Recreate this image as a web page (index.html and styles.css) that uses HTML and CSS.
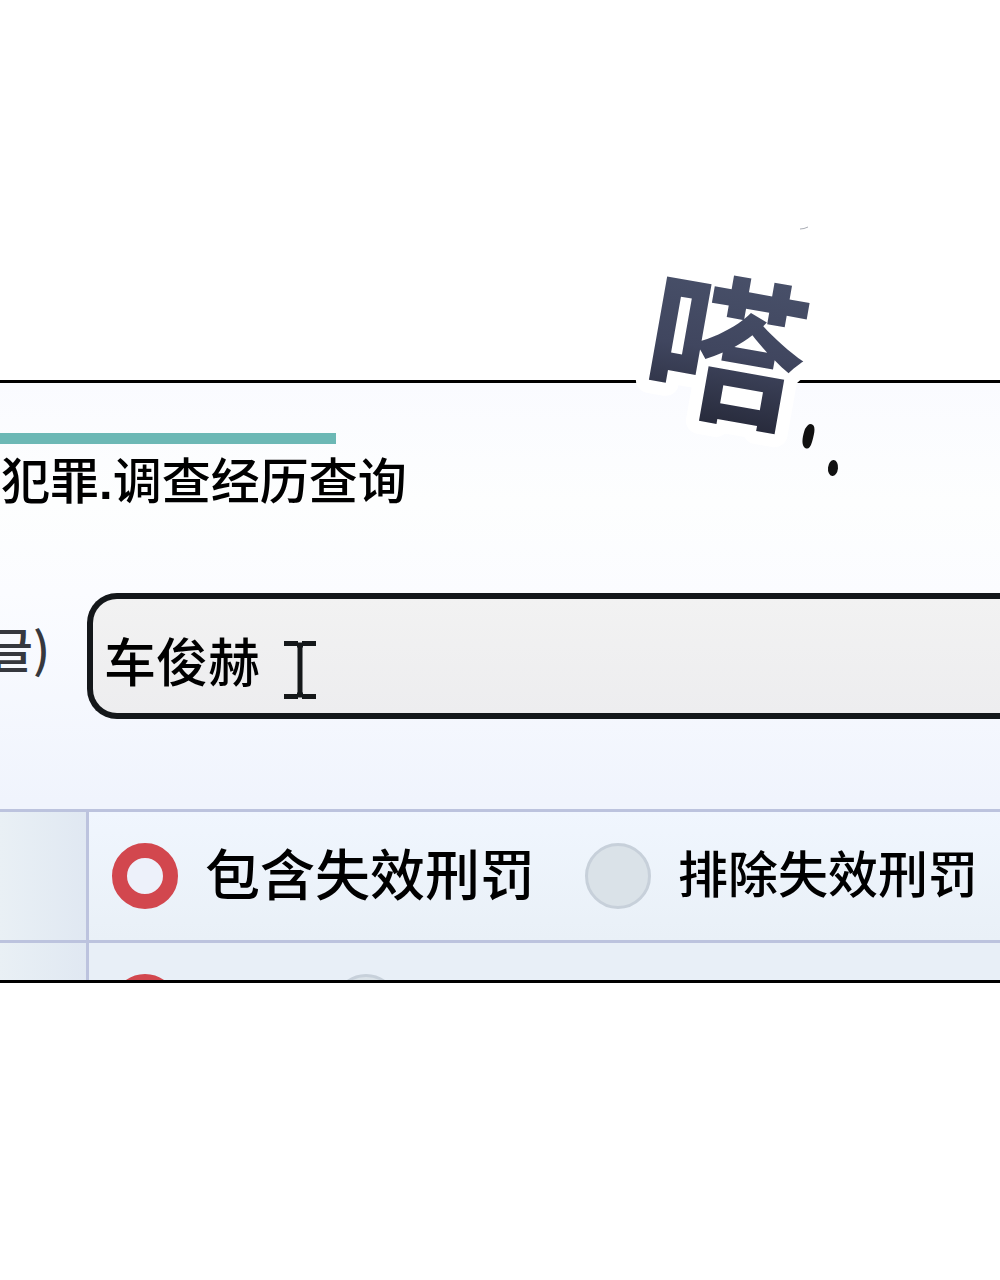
FILE: index.html
```
<!DOCTYPE html>
<html lang="zh-CN">
<head>
  <meta charset="UTF-8">
  <title>犯罪.调查经历查询</title>
  <meta name="viewport" content="width=device-width, initial-scale=1">
  <link rel="stylesheet" href="styles.css">
</head>
<body>

<main class="panel">
  <!-- Sound effect over the top edge -->
  <svg class="effect" width="240" height="270" viewBox="0 0 240 270" aria-label="嗒">
    <defs>
      <linearGradient id="ink" x1="0" y1="0" x2="0" y2="1">
        <stop offset="0.2" stop-color="#485069"/>
        <stop offset="0.55" stop-color="#40465f"/>
        <stop offset="0.9" stop-color="#252838"/>
      </linearGradient>
    </defs>
    <text class="effect-text" x="105" y="190" text-anchor="middle" transform="rotate(10 105 135)">嗒</text>
    <path d="M180 9Q184 9 188 7" fill="none" stroke="#aaadb5" stroke-width="1"/>
    <path d="M191 204C196 205 195 212 192 222C190 229 187 230 184 227C181 223 183 215 185 209C187 206 188 204 191 204Z" fill="#111"/>
    <ellipse cx="213" cy="248" rx="5" ry="8" transform="rotate(6 213 248)" fill="#111"/>
  </svg>

  <header class="heading">
    <div class="accent"></div>
    <h1>犯罪<b>.</b>调查经历查询</h1>
  </header>

  <form>
    <div class="name-row">
      <label class="name-label" for="nome">글)</label>
      <div class="name-field">
        <input class="name-input" type="text" id="nome" value="车俊赫">
        <svg class="ibeam" width="32" height="58" viewBox="0 0 32 58">
          <path d="M0 2.500H14M18 2.500H32M0 55.500H14M18 55.500H32M13 4H19M13 54H19" stroke="#15181a" stroke-width="5"/>
          <path d="M16 3V55" stroke="#15181a" stroke-width="5"/>
        </svg>
      </div>
    </div>

    <div class="options">
      <div class="option-row">
        <div class="option-head"></div>
        <div class="option-list">
          <label class="option"><input type="radio" name="punicao" checked><span>包含失效刑罚</span></label>
          <label class="option option-small"><input type="radio" name="punicao"><span>排除失效刑罚</span></label>
        </div>
      </div>
      <div class="option-row option-row-cut">
        <div class="option-head"></div>
        <div class="option-list option-list-wide">
          <input type="radio" name="extra" aria-label="1" checked>
          <input type="radio" name="extra" aria-label="2">
        </div>
      </div>
    </div>
  </form>
</main>

</body>
</html>
```
FILE: styles.css
```
* {
  box-sizing: border-box;
}

body {
  font-family: "Liberation Sans", "Noto Sans CJK SC", sans-serif;
  margin: 0;
  padding: 380px 0 297px;
  background: #fff;
  color: #000;
}

.panel {
  position: relative;
  border-top: 3px solid #000;
  border-bottom: 3px solid #000;
  background: linear-gradient(#fafbff, #fdfefe 20%, #fbfcff 35%, #f0f4fd 70%);
}

.effect {
  position: absolute;
  top: -163px;
  left: 62%;
  overflow: visible;
}

.effect-text {
  font-family: "Noto Sans CJK SC", sans-serif;
  font-size: 160px;
  font-weight: 700;
  fill: url(#ink);
  stroke: #fff;
  stroke-width: 26px;
  stroke-linejoin: round;
  paint-order: stroke;
}

.heading {
  padding-top: 50px;
}

.accent {
  width: 336px;
  height: 11px;
  background: #6cb8b5;
}

h1 {
  margin: 0;
  padding: 8px 0 0 1px;
  font-size: 49px;
  font-weight: 500;
  line-height: 60px;
}

.name-row {
  display: flex;
  align-items: center;
  padding: 81px 0 90px;
}

.name-label {
  display: flex;
  flex: none;
  justify-content: flex-end;
  width: 87px;
  padding: 0 37px 18px 0;
  font-family: "Noto Sans CJK KR", sans-serif;
  font-size: 48px;
  font-weight: 500;
  line-height: 60px;
  color: #36383e;
}

.name-field {
  position: relative;
  flex: 1;
}

.name-input {
  display: block;
  width: 100%;
  height: 126px;
  padding: 6px 11px 0;
  border: 6px solid #14171a;
  border-right: none;
  border-radius: 30px 0 0 30px;
  background: linear-gradient(#f2f2f2, #ededef);
  font-family: "Noto Sans CJK SC", sans-serif;
  font-size: 52px;
  font-weight: 500;
  color: #000;
  outline: none;
}

.ibeam {
  position: absolute;
  top: 48px;
  left: 197px;
}

.option-row {
  display: flex;
  height: 131px;
  border-top: 3px solid #bcc3de;
}

.option-row-cut {
  height: 40px;
  overflow: hidden;
}

.option-head {
  flex: none;
  width: 89px;
  border-right: 3px solid #bcc3de;
  background: linear-gradient(90deg, #e9f0f5, #e0e8f2);
}

.option-list {
  display: flex;
  flex: 1;
  align-items: flex-start;
  gap: 50px;
  padding: 31px 0 0 23px;
  background: linear-gradient(#f0f6fe, #e9f0f7);
}

.option-list-wide {
  gap: 155px;
  background: #e8eff7;
}

.option {
  display: flex;
  flex: none;
  align-items: center;
  gap: 27px;
  height: 66px;
  font-size: 55px;
  font-weight: 500;
  line-height: 66px;
  white-space: nowrap;
}

.option-small {
  font-size: 50px;
}

input[type="radio"] {
  appearance: none;
  flex: none;
  width: 66px;
  height: 66px;
  margin: 0;
  border: 3px solid #c7d0da;
  border-radius: 50%;
  background: #dae2e8;
}

input[type="radio"]:checked {
  border: 15px solid #d2474e;
  background: #edf1fa;
}
```
